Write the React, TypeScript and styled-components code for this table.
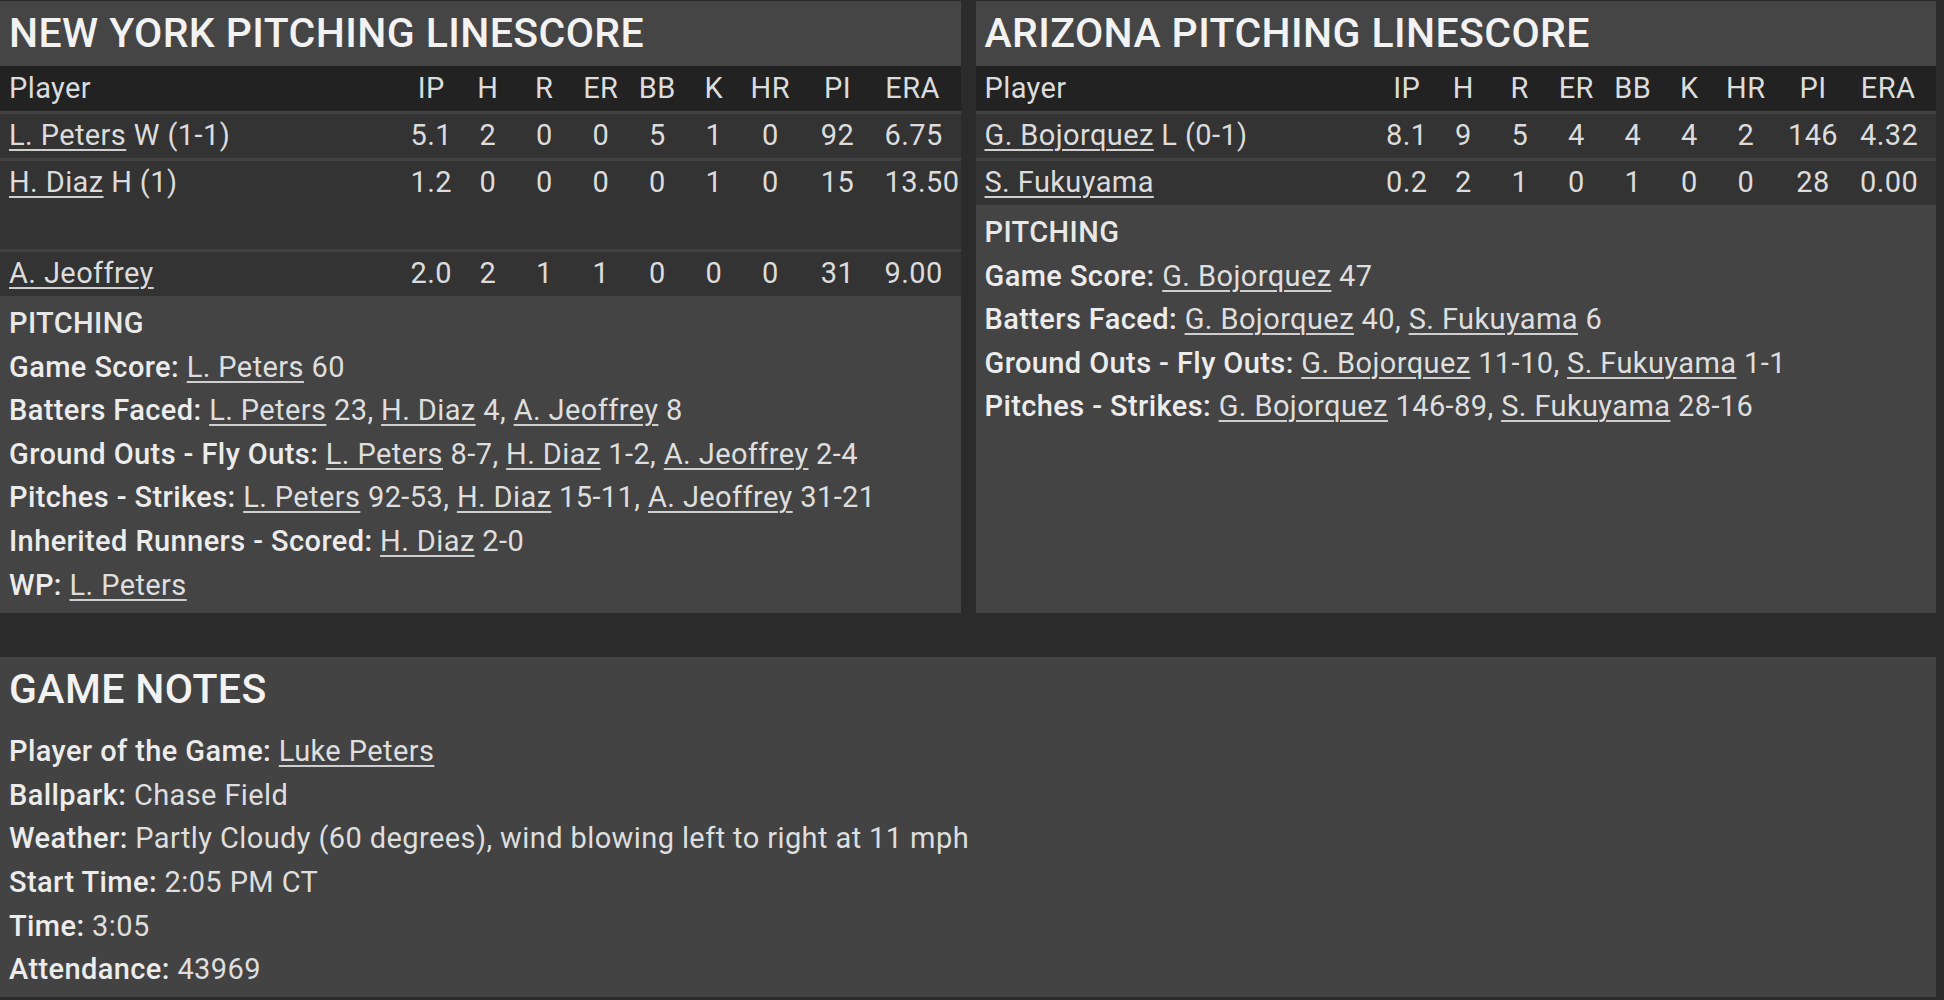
import styled, { createGlobalStyle } from "styled-components";

const GlobalStyle = createGlobalStyle`
  html, body {
    margin: 0;
    padding: 0;
    background: #2b2b2b;
  }
  body {
    font-family: Roboto, "Liberation Sans", sans-serif;
    color: #e0e0e0;
  }
`;

const Page = styled.div`
  width: 1936px;
  padding: 1px 0 3px 0;
  display: flex;
  flex-direction: column;
  gap: 44px;
`;

const TopRow = styled.div`
  display: grid;
  grid-template-columns: 1fr 1fr;
  gap: 15px;
`;

const Panel = styled.section`
  display: flex;
  flex-direction: column;
  background: #444444;
`;

const PanelTitle = styled.h2<{ $flat?: boolean }>`
  margin: 0;
  height: 65px;
  line-height: 65px;
  padding-left: 9px;
  font-size: 41px;
  letter-spacing: 0.4px;
  font-weight: 500;
  color: #f2f2f2;
  background: ${({ $flat }) => ($flat ? "transparent" : "#454545")};
`;

const GRID = "1fr repeat(7, 56.5px) 78px 78px";

const HeadRow = styled.div`
  display: grid;
  grid-template-columns: ${GRID};
  padding: 0 6px 0 9px;
  height: 45px;
  line-height: 45px;
  font-size: 29px;
  letter-spacing: 0.4px;
  background: #222222;
  color: #dcdcdc;
`;

const BodyRow = styled.div<{ $tall?: boolean }>`
  display: grid;
  grid-template-columns: ${GRID};
  align-items: start;
  padding: 0 6px 0 9px;
  min-height: ${({ $tall }) => ($tall ? "88px" : "44px")};
  line-height: 42px;
  font-size: 29px;
  letter-spacing: 0.4px;
  background: #333333;
  border-top: 3px solid #424242;
  color: #dcdcdc;
`;

const Cell = styled.div`
  white-space: nowrap;
`;

const Stat = styled.div<{ $era?: boolean }>`
  white-space: nowrap;
  text-align: center;
  padding: ${({ $era }) => ($era ? "0 14px 0 8px" : "0")};
`;

const PlayerLink = styled.a`
  color: inherit;
  text-decoration: underline;
  text-decoration-thickness: 2px;
  text-underline-offset: 4px;
  text-decoration-color: #cfcfcf;
`;

const Section = styled.div`
  flex: 1;
  padding: 6px 9px 6px 9px;
  font-size: 29px;
  letter-spacing: 0.4px;
  line-height: 43.6px;
  color: #dedede;
  background: #444444;
`;

const SectionHead = styled.div`
  font-weight: 500;
  color: #e8e8e8;
`;

const Line = styled.div`
  white-space: nowrap;
`;

const Label = styled.span`
  font-weight: 500;
  color: #ececec;
`;

const NotesPanel = styled.section`
  background: #434343;
`;

const NotesBody = styled.div`
  padding: 8px 9px 5px 9px;
  font-size: 29px;
  letter-spacing: 0.4px;
  line-height: 43.6px;
  color: #dedede;
`;

type Pitcher = {
  name: string;
  note?: string;
  stats: string[];
  tall?: boolean;
};

type Entry = { name: string; value: string };

type Team = {
  title: string;
  pitchers: Pitcher[];
  lines: { label: string; entries: Entry[] }[];
};

const COLS = ["IP", "H", "R", "ER", "BB", "K", "HR", "PI", "ERA"];

const teams: Team[] = [
  {
    title: "NEW YORK PITCHING LINESCORE",
    pitchers: [
      { name: "L. Peters", note: "W (1-1)", stats: ["5.1", "2", "0", "0", "5", "1", "0", "92", "6.75"] },
      { name: "H. Diaz", note: "H (1)", stats: ["1.2", "0", "0", "0", "0", "1", "0", "15", "13.50"], tall: true },
      { name: "A. Jeoffrey", stats: ["2.0", "2", "1", "1", "0", "0", "0", "31", "9.00"] },
    ],
    lines: [
      { label: "Game Score", entries: [{ name: "L. Peters", value: "60" }] },
      {
        label: "Batters Faced",
        entries: [
          { name: "L. Peters", value: "23" },
          { name: "H. Diaz", value: "4" },
          { name: "A. Jeoffrey", value: "8" },
        ],
      },
      {
        label: "Ground Outs - Fly Outs",
        entries: [
          { name: "L. Peters", value: "8-7" },
          { name: "H. Diaz", value: "1-2" },
          { name: "A. Jeoffrey", value: "2-4" },
        ],
      },
      {
        label: "Pitches - Strikes",
        entries: [
          { name: "L. Peters", value: "92-53" },
          { name: "H. Diaz", value: "15-11" },
          { name: "A. Jeoffrey", value: "31-21" },
        ],
      },
      { label: "Inherited Runners - Scored", entries: [{ name: "H. Diaz", value: "2-0" }] },
      { label: "WP", entries: [{ name: "L. Peters", value: "" }] },
    ],
  },
  {
    title: "ARIZONA PITCHING LINESCORE",
    pitchers: [
      { name: "G. Bojorquez", note: "L (0-1)", stats: ["8.1", "9", "5", "4", "4", "4", "2", "146", "4.32"] },
      { name: "S. Fukuyama", stats: ["0.2", "2", "1", "0", "1", "0", "0", "28", "0.00"] },
    ],
    lines: [
      { label: "Game Score", entries: [{ name: "G. Bojorquez", value: "47" }] },
      {
        label: "Batters Faced",
        entries: [
          { name: "G. Bojorquez", value: "40" },
          { name: "S. Fukuyama", value: "6" },
        ],
      },
      {
        label: "Ground Outs - Fly Outs",
        entries: [
          { name: "G. Bojorquez", value: "11-10" },
          { name: "S. Fukuyama", value: "1-1" },
        ],
      },
      {
        label: "Pitches - Strikes",
        entries: [
          { name: "G. Bojorquez", value: "146-89" },
          { name: "S. Fukuyama", value: "28-16" },
        ],
      },
    ],
  },
];

const notes = [
  { label: "Ballpark", value: "Chase Field" },
  { label: "Weather", value: "Partly Cloudy (60 degrees), wind blowing left to right at 11 mph" },
  { label: "Start Time", value: "2:05 PM CT" },
  { label: "Time", value: "3:05" },
  { label: "Attendance", value: "43969" },
];

function TeamPanel({ team }: { team: Team }) {
  return (
    <Panel>
      <PanelTitle>{team.title}</PanelTitle>
      <HeadRow>
        <Cell>Player</Cell>
        {COLS.map((c) => (
          <Stat key={c} $era={c === "ERA"}>
            {c}
          </Stat>
        ))}
      </HeadRow>
      {team.pitchers.map((p) => (
        <BodyRow key={p.name} $tall={p.tall}>
          <Cell>
            <PlayerLink href="#">{p.name}</PlayerLink>
            {p.note ? ` ${p.note}` : ""}
          </Cell>
          {p.stats.map((s, i) => (
            <Stat key={i} $era={i === 8}>
              {s}
            </Stat>
          ))}
        </BodyRow>
      ))}
      <Section>
        <SectionHead>PITCHING</SectionHead>
        {team.lines.map((l) => (
          <Line key={l.label}>
            <Label>{l.label}:</Label>{" "}
            {l.entries.map((e, i) => (
              <span key={e.name}>
                <PlayerLink href="#">{e.name}</PlayerLink>
                {e.value ? ` ${e.value}` : ""}
                {i < l.entries.length - 1 ? ", " : ""}
              </span>
            ))}
          </Line>
        ))}
      </Section>
    </Panel>
  );
}

export default function App() {
  return (
    <>
      <GlobalStyle />
      <Page>
        <TopRow>
          {teams.map((t) => (
            <TeamPanel key={t.title} team={t} />
          ))}
        </TopRow>
        <NotesPanel>
          <PanelTitle $flat>GAME NOTES</PanelTitle>
          <NotesBody>
            <Line>
              <Label>Player of the Game:</Label> <PlayerLink href="#">Luke Peters</PlayerLink>
            </Line>
            {notes.map((n) => (
              <Line key={n.label}>
                <Label>{n.label}:</Label> {n.value}
              </Line>
            ))}
          </NotesBody>
        </NotesPanel>
      </Page>
    </>
  );
}
